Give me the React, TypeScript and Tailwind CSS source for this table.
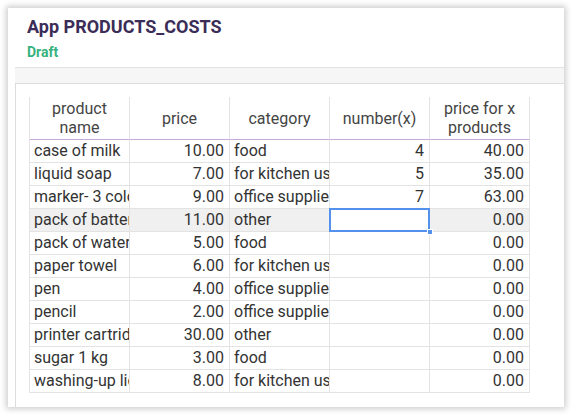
import React from 'react';

const rows = [
  { name: 'case of milk', price: '10.00', category: 'food', qty: '4', total: '40.00' },
  { name: 'liquid soap', price: '7.00', category: 'for kitchen use', qty: '5', total: '35.00' },
  { name: 'marker- 3 colors', price: '9.00', category: 'office supplies', qty: '7', total: '63.00' },
  { name: 'pack of batteries', price: '11.00', category: 'other', qty: '', total: '0.00' },
  { name: 'pack of water', price: '5.00', category: 'food', qty: '', total: '0.00' },
  { name: 'paper towel', price: '6.00', category: 'for kitchen use', qty: '', total: '0.00' },
  { name: 'pen', price: '4.00', category: 'office supplies', qty: '', total: '0.00' },
  { name: 'pencil', price: '2.00', category: 'office supplies', qty: '', total: '0.00' },
  { name: 'printer cartridge', price: '30.00', category: 'other', qty: '', total: '0.00' },
  { name: 'sugar 1 kg', price: '3.00', category: 'food', qty: '', total: '0.00' },
  { name: 'washing-up liquid', price: '8.00', category: 'for kitchen use', qty: '', total: '0.00' },
];

const headers = ['product name', 'price', 'category', 'number(x)', 'price for x products'];

const App = () => {
  const cell = 'h-[23px] border-r border-b border-[#e3e3e3] pl-[4px] pr-[5px] leading-[22px] whitespace-nowrap overflow-hidden';

  return (
    <div className="w-[572px] h-[416px] bg-white pt-[8px] pl-[8px] font-['Roboto',sans-serif]">
      <div className="w-[556px] h-[399px] bg-white shadow-[0_0_6px_2px_rgba(0,0,0,0.2)] flex flex-col">
        <div className="h-[59px] pl-[19px] pt-[7px]">
          <h1 className="text-[18px] font-bold text-[#3b2d57] leading-[24px]">App PRODUCTS_COSTS</h1>
          <p className="mt-[5px] text-[14px] font-bold text-[#36b27e] leading-[16px]">Draft</p>
        </div>
        <div className="ml-[7px] flex-1 flex flex-col bg-[#f6f6f6] border-t border-[#e2e2e2] pt-[15px]">
          <div className="flex-1 bg-white border-t border-l border-[#dcdcdc] pt-[13px] pl-[13px]">
            <div className="grid grid-cols-[repeat(5,100px)] border-l border-[#e3e3e3] text-[16px] text-[#333]">
              {headers.map((h) => (
                <div
                  key={h}
                  className="h-[43px] border-r border-b border-r-[#e3e3e3] border-b-[#c9aad6] flex items-center justify-center text-center leading-[19px] text-[#444] px-[8px]"
                >
                  {h}
                </div>
              ))}
              {rows.map((r, i) => {
                const hl = i === 3 ? 'bg-[#f0f0f0]' : 'bg-white';
                return (
                  <React.Fragment key={r.name}>
                    <div className={`${cell} ${hl}`}>{r.name}</div>
                    <div className={`${cell} ${hl} text-right`}>{r.price}</div>
                    <div className={`${cell} ${hl}`}>{r.category}</div>
                    {i === 3 ? (
                      <div className={`${cell} relative bg-white overflow-visible`}>
                        <div className="absolute -left-px -top-px w-[101px] h-[24px] border-2 border-[#5391ec]" />
                        <div className="absolute right-[-4px] bottom-[-4px] w-[6px] h-[6px] bg-[#5391ec] border border-white" />
                      </div>
                    ) : (
                      <div className={`${cell} ${hl} text-right`}>{r.qty}</div>
                    )}
                    <div className={`${cell} ${hl} text-right`}>{r.total}</div>
                  </React.Fragment>
                );
              })}
            </div>
          </div>
        </div>
      </div>
    </div>
  );
};

export default App;
